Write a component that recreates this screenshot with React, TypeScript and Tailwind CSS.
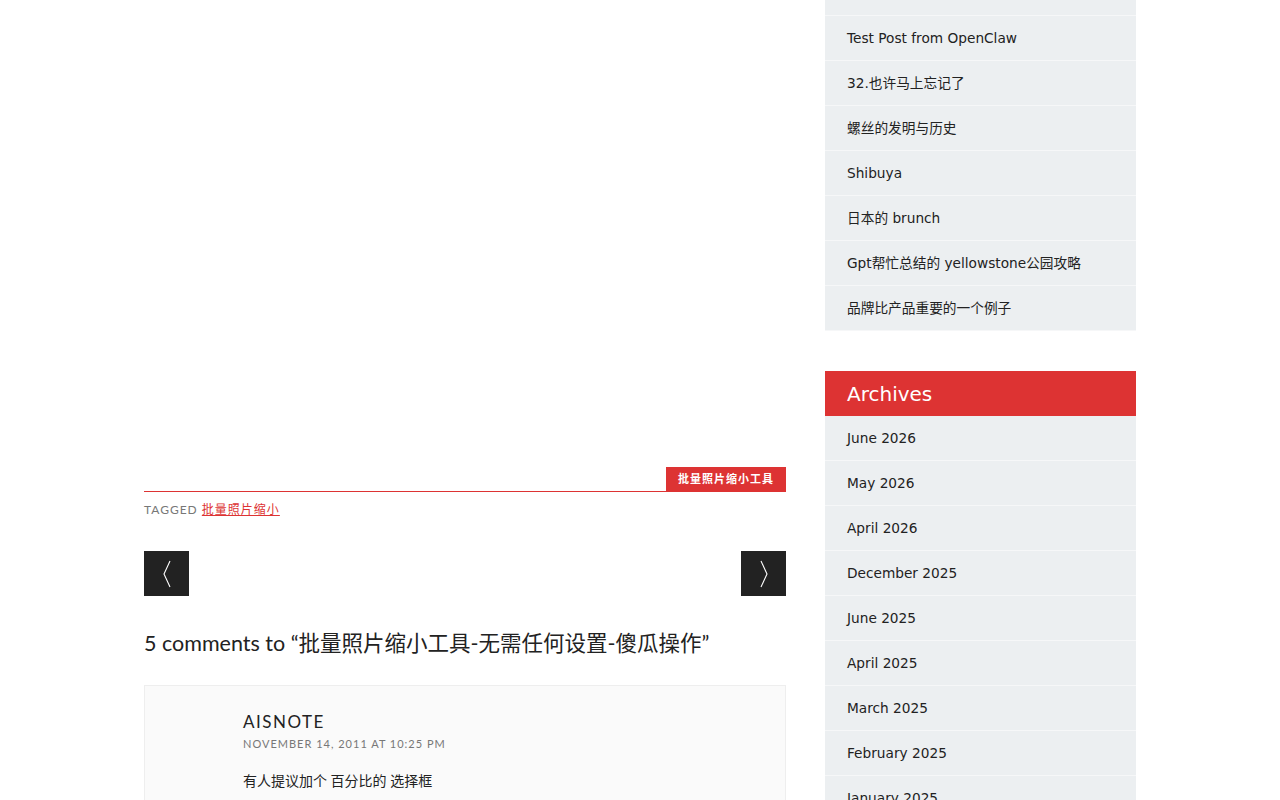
import { ReactNode } from "react";

const recentPosts = [
  "冬天来了的一些小事",
  "Test Post from OpenClaw",
  "32.也许马上忘记了",
  "螺丝的发明与历史",
  "Shibuya",
  "日本的 brunch",
  "Gpt帮忙总结的 yellowstone公园攻略",
  "品牌比产品重要的一个例子",
];

const archives = [
  "June 2026",
  "May 2026",
  "April 2026",
  "December 2025",
  "June 2025",
  "April 2025",
  "March 2025",
  "February 2025",
  "January 2025",
];

const sideFont = { fontFamily: '"DejaVu Sans", "Noto Sans CJK SC", sans-serif' };
const bodyFont = { fontFamily: 'Lato, "Noto Sans CJK SC", sans-serif' };

function SideItem({ children }: { children: ReactNode }) {
  return (
    <li className="flex h-[45px] items-center border-b border-[#f6f7f8] bg-[#eceff1] px-[22px] text-[13.7px] text-[#222]">
      {children}
    </li>
  );
}

function Chevron({ dir }: { dir: "left" | "right" }) {
  return (
    <svg width="12" height="28" viewBox="0 0 12 28" fill="none">
      <path
        d={dir === "left" ? "M9 1 L3 14 L9 27" : "M3 1 L9 14 L3 27"}
        stroke="#fff"
        strokeWidth="1.1"
      />
    </svg>
  );
}

export default function App() {
  return (
    <div className="h-[800px] overflow-hidden bg-white" style={bodyFont}>
      <div className="mx-auto box-content flex w-[992px] gap-[39px] px-[144px]">
        {/* post body */}
        <main className="w-[642px] shrink-0">
          <div className="h-[467px]" />

          <div className="flex justify-end">
            <span className="bg-[#dd3333] px-3 py-1 text-[11px] font-bold leading-4 tracking-[1px] text-white">
              批量照片缩小工具
            </span>
          </div>
          <div className="h-px bg-[#dd3333]" />
          <div className="mt-[9px] text-[12px] tracking-[1px] text-[#777]">
            TAGGED{" "}
            <a href="#" className="text-[#dd3333] underline">
              批量照片缩小
            </a>
          </div>

          <nav className="mt-[32px] flex justify-between">
            <a href="#" className="flex h-[45px] w-[45px] items-center justify-center bg-[#222]">
              <Chevron dir="left" />
            </a>
            <a href="#" className="flex h-[45px] w-[45px] items-center justify-center bg-[#222]">
              <Chevron dir="right" />
            </a>
          </nav>

          <h2 className="mt-[31px] text-[21.5px] text-[#222]">
            5 comments to “批量照片缩小工具-无需任何设置-傻瓜操作”
          </h2>

          <div className="mt-[26px] border border-[#eee] bg-[#fafafa] pb-10 pl-[98px] pr-8 pt-[23px]">
            <div className="text-[17px] tracking-[1.5px] text-[#222]">AISNOTE</div>
            <div className="mt-[1px] text-[11px] tracking-[1px] text-[#777]">
              NOVEMBER 14, 2011 AT 10:25 PM
            </div>
            <p className="mt-[18px] text-[14px] text-[#222]">有人提议加个 百分比的 选择框</p>
          </div>
        </main>

        {/* sidebar widgets */}
        <aside className="w-[311px] shrink-0" style={sideFont}>
          <ul className="-mt-[29px]">
            {recentPosts.map((p) => (
              <SideItem key={p}>{p}</SideItem>
            ))}
          </ul>

          <h3 className="mt-10 flex h-[45px] items-center bg-[#dd3333] px-[22px] text-[20px] text-white">
            Archives
          </h3>
          <ul>
            {archives.map((a) => (
              <SideItem key={a}>{a}</SideItem>
            ))}
          </ul>
        </aside>
      </div>
    </div>
  );
}
